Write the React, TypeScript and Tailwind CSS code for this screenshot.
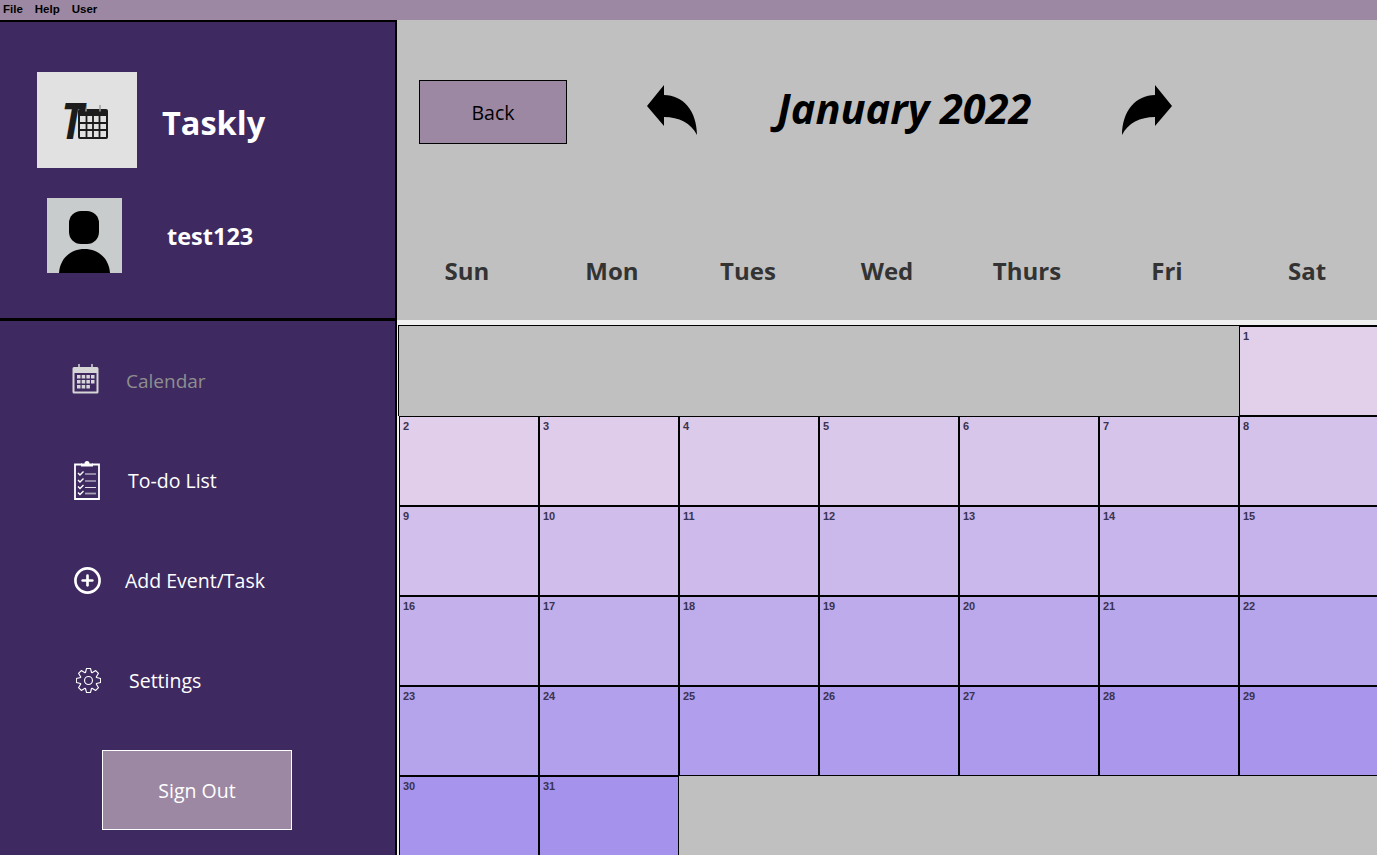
import { CirclePlus } from "lucide-react";

const UI_FONT = "font-['Open_Sans','Noto_Sans',sans-serif]";

// first of January 2022 is a Saturday, so six columns stay empty
const FIRST_ROW = [1];
const DAYS = Array.from({ length: 30 }, (_, i) => i + 2);

function dayColor(day: number) {
  const t = (day - 1) / 30;
  const mix = (a: number, b: number) => Math.round(a + (b - a) * t);
  return `rgb(${mix(226, 165)}, ${mix(208, 146)}, ${mix(234, 236)})`;
}

// eight flat teeth round a 24 unit circle
function gearPath() {
  const pts: string[] = [];
  const step = Math.PI / 4;
  for (let i = 0; i < 8; i++) {
    const a = i * step - Math.PI / 2;
    const at = (r: number, da: number) =>
      `${(12 + r * Math.cos(a + da)).toFixed(2)} ${(12 + r * Math.sin(a + da)).toFixed(2)}`;
    pts.push(at(8.2, -0.36), at(11.8, -0.16), at(11.8, 0.16), at(8.2, 0.36));
  }
  return `M${pts.join(" L")} Z`;
}

function ArrowLeft() {
  return (
    <svg width="50" height="50" viewBox="0 0 50 50" aria-hidden="true">
      <path d="M0 21 L17 0 L17 10 C36 10 50 26 50 50 C44 38 32 32 17 32 L17 41 Z" fill="#000" />
    </svg>
  );
}

function ArrowRight() {
  return (
    <svg width="50" height="50" viewBox="0 0 50 50" aria-hidden="true">
      <path d="M50 21 L33 0 L33 10 C14 10 0 26 0 50 C6 38 18 32 33 32 L33 41 Z" fill="#000" />
    </svg>
  );
}

function LogoCalendar() {
  return (
    <svg width="30" height="34" viewBox="0 0 30 34" className="mt-[3px]" aria-hidden="true">
      <path d="M0 6 a2 2 0 0 1 2 -2 H28 a2 2 0 0 1 2 2 V32 a2 2 0 0 1 -2 2 H2 a2 2 0 0 1 -2 -2 Z" fill="#1c1c1c" />
      <path d="M2 11 H28 V32 H2 Z" fill="#e1e1e1" />
      <path d="M2 18 H28 M2 25 H28 M8.5 11 V32 M15 11 V32 M21.5 11 V32" stroke="#1c1c1c" strokeWidth="1.8" />
      <path d="M8 0.5 V6 M22 0.5 V6" stroke="#9a9a9a" strokeWidth="1.5" strokeLinecap="round" />
    </svg>
  );
}

function Avatar() {
  return (
    <svg width="75" height="75" viewBox="0 0 75 75" aria-hidden="true">
      <rect width="75" height="75" fill="#c8cccc" />
      <rect x="22" y="13" width="30" height="33" rx="12" fill="#000" />
      <path d="M12 75 C13 60 24 51 37.5 51 C51 51 62 60 63 75 Z" fill="#000" />
    </svg>
  );
}

function CalendarIcon() {
  return (
    <svg width="28" height="30" viewBox="0 0 28 30" aria-hidden="true">
      <path d="M0.5 4.5 a1.5 1.5 0 0 1 1.5 -1.5 H25 a1.5 1.5 0 0 1 1.5 1.5 V28 a1.5 1.5 0 0 1 -1.5 1.5 H2 a1.5 1.5 0 0 1 -1.5 -1.5 Z" fill="#d6d6d6" />
      <path d="M2.5 9 H24.5 V27.5 H2.5 Z" fill="#3e2a61" />
      <path d="M7 0 V5 M20 0 V5" stroke="#d6d6d6" strokeWidth="1.5" />
      <path d="M5 11 h3.5 v3.5 h-3.5 Z M9.7 11 h3.5 v3.5 h-3.5 Z M14.4 11 h3.5 v3.5 h-3.5 Z M19 11 h3.5 v3.5 h-3.5 Z M5 16 h3.5 v3.5 h-3.5 Z M9.7 16 h3.5 v3.5 h-3.5 Z M14.4 16 h3.5 v3.5 h-3.5 Z M19 16 h3.5 v3.5 h-3.5 Z M5 21 h3.5 v3.5 h-3.5 Z M9.7 21 h3.5 v3.5 h-3.5 Z M14.4 21 h3.5 v3.5 h-3.5 Z" fill="#d6d6d6" />
    </svg>
  );
}

function ClipboardIcon() {
  return (
    <svg width="26" height="40" viewBox="0 0 26 40" aria-hidden="true">
      <path d="M8 4.5 H1 V39 H25 V4.5 H18" fill="none" stroke="#fff" strokeWidth="1.8" />
      <path d="M7 6.5 V3.5 H10.5 A2.5 2.5 0 0 1 15.5 3.5 H19 V6.5 Z" fill="#fff" />
      <path d="M4 13 l2 2 l3.5 -3.5 M4 20 l2 2 l3.5 -3.5 M4 26.5 l2 2 l3.5 -3.5 M4 32.5 l2 2 l3.5 -3.5" fill="none" stroke="#fff" strokeWidth="1.4" />
      <path d="M11 14 H22 M11 21 H22 M11 27.5 H22" stroke="#e4e1e9" strokeWidth="1.1" />
      <path d="M11 33.5 H22" stroke="#a9a3b5" strokeWidth="1.8" />
    </svg>
  );
}

function GearIcon() {
  return (
    <svg width="25" height="25" viewBox="0 0 24 24" fill="none" stroke="#fff" strokeWidth="1.1" aria-hidden="true">
      <path d={gearPath()} strokeLinejoin="round" />
      <circle cx="12" cy="12" r="3.8" />
    </svg>
  );
}

function DayCell({ day }: { day: number }) {
  return (
    <div
      className="border border-black pl-[3px] pt-[2px] font-['Liberation_Sans',Arial,sans-serif] text-[11px] leading-[14px] font-bold text-[#3a3350]"
      style={{ backgroundColor: dayColor(day) }}
    >
      {day}
    </div>
  );
}

export default function App() {
  return (
    <div className={`flex h-[855px] w-[1377px] flex-col overflow-hidden ${UI_FONT}`}>
      <div className="flex h-5 items-center gap-[12px] bg-[#9d88a3] pl-[3px] font-['Liberation_Sans',Arial,sans-serif] text-[11.5px] font-bold text-black">
        <span>File</span>
        <span>Help</span>
        <span>User</span>
      </div>

      <div className="flex min-h-0 flex-1">
        <aside className="flex w-[397px] shrink-0 flex-col border-r-2 border-t-2 border-black bg-[#3e2a61] text-white">
          <div className="h-[299px] shrink-0 border-b-[3px] border-black pt-[50px]">
            <div className="ml-[37px] flex items-center">
              <div className="flex h-[96px] w-[100px] items-center bg-[#e1e1e1] pl-[24px]">
                <span className="w-[17px] origin-left scale-x-[0.85] text-[50px] leading-none font-bold italic text-[#1c1c1c]">
                  T
                </span>
                <LogoCalendar />
              </div>
              <span className="ml-[25px] mt-[6px] text-[32.5px] font-bold">Taskly</span>
            </div>
            <div className="ml-[47px] mt-[30px] flex items-center">
              <Avatar />
              <span className="ml-[45px] mt-[2px] text-[23.5px] font-bold">test123</span>
            </div>
          </div>

          <nav className="flex flex-col pt-[9px] text-[19.5px]">
            <div className="flex h-[100px] items-center pl-[72px]">
              <div className="-mt-[3px]">
                <CalendarIcon />
              </div>
              <span className="ml-[26px] mt-[2px] text-[19px] text-[#8f8f8f]">Calendar</span>
            </div>
            <div className="flex h-[100px] items-center pl-[74px]">
              <ClipboardIcon />
              <span className="ml-[28px] mt-[2px]">To-do List</span>
            </div>
            <div className="flex h-[100px] items-center pl-[73px]">
              <CirclePlus size={29} strokeWidth={2.2} />
              <span className="ml-[23px] mt-[2px]">Add Event/Task</span>
            </div>
            <div className="flex h-[100px] items-center pl-[76px]">
              <GearIcon />
              <span className="ml-[28px] mt-[2px]">Settings</span>
            </div>
          </nav>

          <button className="ml-[102px] mt-[20px] h-[80px] w-[190px] border border-white bg-[#9d88a3] pt-[2px] text-[19.5px] text-white">
            Sign Out
          </button>
        </aside>

        <main className="flex min-w-0 flex-1 flex-col bg-[#f0f0f0]">
          <div className="h-[300px] shrink-0 bg-[#c0c0c0] pt-[60px]">
            <div className="flex items-start pl-[22px]">
              <button className="h-[64px] w-[148px] shrink-0 border border-black bg-[#9d88a3] pt-[2px] text-[19.5px] text-black">
                Back
              </button>
              <div className="ml-[80px] mt-[5px]">
                <ArrowLeft />
              </div>
              <div className="h-[56px] w-[425px] pl-[80px] text-[41.5px] leading-[56px] font-bold italic text-black">
                January 2022
              </div>
              <div className="mt-[5px]">
                <ArrowRight />
              </div>
            </div>
            <div className="mt-[107px] grid h-[40px] grid-cols-[140px_150px_122px_156px_124px_156px_124px] items-center text-center text-[24px] font-bold text-[#333]">
              <span>Sun</span>
              <span>Mon</span>
              <span>Tues</span>
              <span>Wed</span>
              <span>Thurs</span>
              <span>Fri</span>
              <span>Sat</span>
            </div>
          </div>

          <div className="mt-[5px] min-h-0 flex-1">
            <div className="ml-px border-t border-black pl-px">
              <div className="grid grid-cols-[repeat(7,140px)] auto-rows-[90px]">
                <div className="col-span-6 -ml-px border-l border-black bg-[#c0c0c0]" />
                {FIRST_ROW.map((d) => (
                  <DayCell key={d} day={d} />
                ))}
                {DAYS.map((d) => (
                  <DayCell key={d} day={d} />
                ))}
                <div className="col-span-5 bg-[#c0c0c0]" />
              </div>
            </div>
          </div>
        </main>
      </div>
    </div>
  );
}
